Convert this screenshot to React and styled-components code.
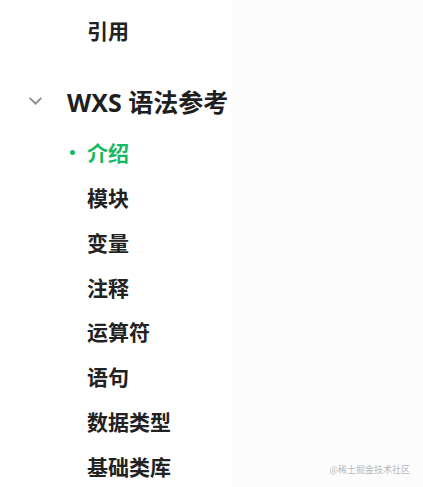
import React from "react";
import styled, { createGlobalStyle } from "styled-components";

const GlobalStyle = createGlobalStyle`
  body {
    margin: 0;
    background: #fcfcfc;
    font-family: "Noto Sans CJK SC", "Noto Sans", sans-serif;
  }
`;

const secciones = ["介绍", "模块", "变量", "注释", "运算符", "语句", "数据类型", "基础类库"];

const App = () => {
  return (
    <>
      <GlobalStyle />
      <Pagina>
        <Barra>
          <Item>引用</Item>
          <Grupo>
            <Flecha viewBox="0 0 16 16">
              <path d="M2.5 5.5 L8 11 L13.5 5.5" fill="none" stroke="#8a8a8a" strokeWidth="1.6" />
            </Flecha>
            <Titulo>WXS 语法参考</Titulo>
          </Grupo>
          <Lista>
            {secciones.map((s, i) => (
              <Item key={s} activo={i === 0}>
                {i === 0 && <Punto />}
                {s}
              </Item>
            ))}
          </Lista>
        </Barra>
        <Contenido>
          <Marca>@稀土掘金技术社区</Marca>
        </Contenido>
      </Pagina>
    </>
  );
};

const Pagina = styled.div`
  display: flex;
  min-height: 487px;
  overflow: hidden;
`;

const Barra = styled.nav`
  width: 232px;
  background: #ffffff;
  padding-top: 8px;
  box-sizing: border-box;
`;

const Contenido = styled.main`
  flex: 1;
  position: relative;
  background: #fcfcfc;
`;

const Item = styled.div`
  position: relative;
  height: 44.8px;
  display: flex;
  align-items: center;
  padding-left: 87px;
  font-size: 21px;
  font-weight: 700;
  color: ${(props) => (props.activo ? "#15b863" : "#222222")};
`;

const Punto = styled.span`
  position: absolute;
  left: 70px;
  top: 50%;
  width: 5px;
  height: 5px;
  margin-top: -2px;
  border-radius: 50%;
  background: #15b863;
`;

const Grupo = styled.div`
  display: flex;
  align-items: center;
  height: 44px;
  margin-top: 26px;
  padding-left: 27px;
`;

const Flecha = styled.svg`
  width: 17px;
  height: 17px;
  margin-right: 23px;
`;

const Titulo = styled.span`
  font-family: "Noto Sans", "Noto Sans CJK SC", sans-serif;
  font-size: 25px;
  font-weight: 700;
  color: #1f1f1f;
`;

const Lista = styled.div`
  margin-top: 7px;
  display: flex;
  flex-direction: column;
`;

const Marca = styled.span`
  position: absolute;
  right: 13px;
  bottom: 12px;
  font-size: 9px;
  color: #b8b8b8;
`;

export default App;
